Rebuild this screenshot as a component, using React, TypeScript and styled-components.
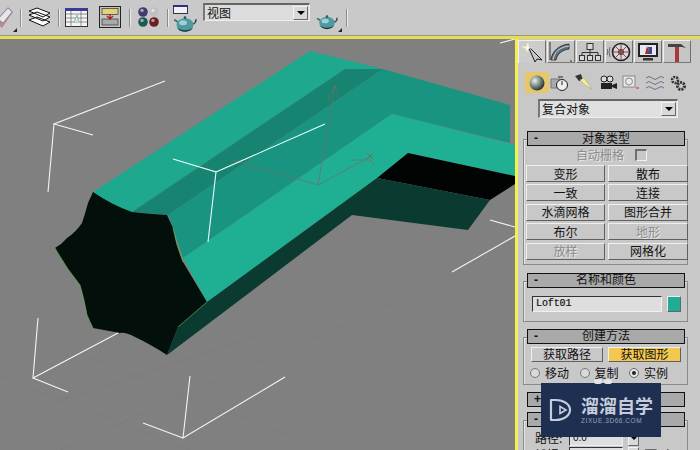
import React from "react";
import styled, { createGlobalStyle } from "styled-components";

const Global = createGlobalStyle`
  html, body { margin: 0; padding: 0; width: 700px; height: 450px; overflow: hidden; background: #c8c8c8; }
  body { font-family: "Noto Sans CJK SC", "Liberation Sans", sans-serif; }
`;

const Page = styled.div`
  width: 700px; height: 450px; display: flex; flex-direction: column; overflow: hidden; position: relative;
  background: #c8c8c8; color: #111; font-size: 12px; line-height: 1;
`;
const Toolbar = styled.header`
  height: 36px; flex: none; display: flex; align-items: flex-start; background: #c9c9c9;
  border-bottom: 3px solid #e6dc5a; box-shadow: inset 0 -1px 0 #9a9a80;
`;
const Tool = styled.div<{ $w: number; $ml: number; $mt: number }>`
  width: ${p => p.$w}px; margin-left: ${p => p.$ml}px; margin-top: ${p => p.$mt}px; flex: none; line-height: 0; overflow: hidden;
`;
const Sep = styled.div<{ $ml: number }>`
  width: 1px; height: 18px; margin-left: ${p => p.$ml}px; margin-top: 9px; flex: none;
  background: #8c8c8c; box-shadow: 1px 0 0 #ececec;
`;
const ViewCombo = styled.div`
  width: 107px; height: 18px; margin-left: 6px; margin-top: 3px; flex: none; box-sizing: border-box; display: flex; align-items: center;
  background: #dcdcdc; border-top: 2px solid #666; border-left: 2px solid #777; border-right: 1px solid #eee; border-bottom: 1px solid #eee;
  padding-left: 2px; font-size: 12px;
`;
const ComboLabel = styled.span` flex: 1; `;
const ComboArrow = styled.div`
  width: 15px; height: 14px; margin-right: 1px; box-sizing: border-box; display: flex; align-items: center; justify-content: center; background: #d8d8d8;
  border-top: 1px solid #f4f4f4; border-left: 1px solid #f4f4f4; border-right: 1px solid #666; border-bottom: 1px solid #666;
  &::after { content: ""; border-left: 4px solid transparent; border-right: 4px solid transparent; border-top: 4px solid #000; }
`;
const Main = styled.main` flex: 1; display: flex; min-height: 0; `;
const Viewport = styled.section`
  width: 515px; flex: none; background: #808080; line-height: 0; overflow: hidden;
`;
const Panel = styled.aside`
  flex: 1; overflow: hidden; background: #c8c8c8; border-left: 3px solid #f5f050; box-sizing: border-box;
`;
const Tabs = styled.nav` display: flex; gap: 1px; margin-top: 1px; height: 23px; `;
const Tab = styled.div<{ $active?: boolean }>`
  width: 28px; flex: none; box-sizing: border-box; display: flex; align-items: center; justify-content: center; line-height: 0;
  border-top: 1px solid #f0f0f0; border-left: 1px solid #f0f0f0; border-right: 1px solid #707070;
  border-bottom: ${p => (p.$active ? "none" : "1px solid #777")};
  background: ${p => (p.$active ? "#cccccc" : "#c6c6c6")};
`;
const IconRow = styled.div` display: flex; margin-top: 9px; padding-left: 7px; height: 21px; `;
const IconCell = styled.div<{ $on?: boolean }>`
  width: 23.6px; flex: none; display: flex; align-items: center; justify-content: center; line-height: 0;
  background: ${p => (p.$on ? "#e8c66a" : "transparent")};
`;
const TypeCombo = styled(ViewCombo)`
  width: 140px; height: 19px; margin: 6px 0 0 20px; background: #e0e0e0;
`;
const Stack = styled.div` margin: 13px 0 0 5px; width: 165px; display: flex; flex-direction: column; `;
const Rollout = styled.div<{ $mb?: number }>` margin-bottom: ${p => p.$mb ?? 7}px; `;
const RollHead = styled.div`
  position: relative; height: 15px; margin: 0 3px 0 4px; box-sizing: border-box; padding-bottom: 2px;
  border: 1px solid #111; background: #a9a9a9; display: flex; align-items: center; justify-content: center;
`;
const Minus = styled.span` position: absolute; left: 6px; top: 0; font-family: "Liberation Sans", sans-serif; font-size: 12px; font-weight: 700; line-height: 12px; `;
const RollBody = styled.div<{ $pt: number; $pb: number; $px?: number }>`
  margin-top: -7px; box-sizing: border-box; border: 1px solid #8a8a8a; box-shadow: 1px 1px 0 #e6e6e6 inset;
  padding: ${p => p.$pt}px ${p => p.$px ?? 0}px ${p => p.$pb}px ${p => (p.$px ?? 0) + 2}px;
`;
const CheckRow = styled.div` display: flex; align-items: center; height: 12px; margin-bottom: 4px; padding-left: 50px; gap: 11px; `;
const Off = styled.span` color: #8c8c8c; text-shadow: 1px 1px 0 #e8e8e8; `;
const Check = styled.span<{ $dark?: boolean }>`
  width: 12px; height: 12px; box-sizing: border-box; display: block; flex: none; background: ${p => (p.$dark ? "#6a6a6a" : "#c8c8c8")};
  border-top: 2px solid #707070; border-left: 2px solid #707070; border-right: 1px solid #f0f0f0; border-bottom: 1px solid #f0f0f0;
`;
const BtnGrid = styled.div` display: grid; grid-template-columns: 79px 80px; column-gap: 3px; grid-auto-rows: 17px; row-gap: 2.4px; `;
const Btn = styled.div<{ $off?: boolean; $hot?: boolean }>`
  box-sizing: border-box; display: flex; align-items: center; justify-content: center;
  background: ${p => (p.$hot ? "#f3c850" : "#c8c8c8")};
  color: ${p => (p.$off ? "#8a8a8a" : "#111")};
  text-shadow: ${p => (p.$off ? "1px 1px 0 #e8e8e8" : "none")};
  border-top: 1px solid #efefef; border-left: 1px solid #efefef; border-right: 1px solid #606060; border-bottom: 1px solid #606060;
`;
const NameRow = styled.div` display: flex; gap: 5px; `;
const Field = styled.div<{ $w: number }>`
  width: ${p => p.$w}px; height: 16px; box-sizing: border-box; flex: none; background: #dedede; display: flex; align-items: center; padding-left: 3px;
  border-top: 1px solid #333; border-left: 1px solid #333; border-right: 1px solid #f0f0f0; border-bottom: 1px solid #f0f0f0;
`;
const LoftText = styled.span` font-family: "Liberation Mono", monospace; font-size: 10px; letter-spacing: -0.1px; -webkit-text-stroke: 0.2px #111; `;
const Swatch = styled.div`
  width: 15px; height: 16px; background: #1fae93; box-sizing: border-box;
  border-top: 1px solid #eee; border-left: 1px solid #eee; border-right: 1px solid #666; border-bottom: 1px solid #666;
`;
const MethodGrid = styled.div` display: grid; grid-template-columns: 72px 73px; column-gap: 5px; grid-auto-rows: 15px; padding-left: 5px; margin-bottom: 4px; `;
const RadioRow = styled.div` display: flex; align-items: center; height: 14px; padding-left: 4px; `;
const RadioItem = styled.label` display: flex; align-items: center; gap: 5px; width: 49.5px; flex: none; font-size: 12px; `;
const Dot = styled.span<{ $on?: boolean }>`
  width: 10px; height: 10px; box-sizing: border-box; border-radius: 50%; flex: none;
  background: ${p => (p.$on ? "#222" : "#d8d8d8")};
  border: ${p => (p.$on ? "3px solid #e4e4e4" : "1px solid #777")};
  outline: ${p => (p.$on ? "1px solid #666" : "none")};
  outline-offset: -1px;
`;
const PathRow = styled.div` display: flex; align-items: center; height: 16px; padding-left: 9px; gap: 5px; margin-bottom: 1px; `;
const PathLabel = styled.span` width: 29px; flex: none; `;
const Spin = styled(ComboArrow)` width: 11px; height: 16px; `;
const NumText = styled.span` font-family: "Liberation Sans", sans-serif; font-size: 10px; `;
const Watermark = styled.div`
  position: absolute; z-index: 5; left: 541px; top: 383px; width: 120px; height: 54px; background: #1f2f52;
  display: flex; align-items: center; gap: 8px; padding-left: 7px; box-sizing: border-box;
  color: #c6cdda;
  &::before { content: ""; position: absolute; left: 53px; top: -4px; width: 8px; height: 5px; border-radius: 4px; background: #e4e4e4; box-shadow: 10px 0 0 #e4e4e4; }
`;
const MarkText = styled.div` display: flex; flex-direction: column; gap: 3px; `;
const MarkTitle = styled.div` font-size: 18px; font-weight: 700; line-height: 17px; width: 74px; white-space: nowrap; letter-spacing: 0; `;
const MarkSub = styled.div` font-family: "Liberation Sans", sans-serif; font-size: 6.5px; line-height: 7px; letter-spacing: 0.55px; white-space: nowrap; color: #98a3b8; `;

const Teapot = ({ w = 24 }: { w?: number }) => (
  <svg width={w} height={w * 0.72} viewBox="0 0 24 17">
    <path d="M1 5c2 0 4 2 5 5" stroke="#3c6a70" strokeWidth="1.6" fill="none" />
    <path d="M19 9c2 0 4-2 4-5" stroke="#1f4a50" strokeWidth="1.6" fill="none" />
    <ellipse cx="12" cy="9.5" rx="8.5" ry="6.5" fill="#4f9aa2" />
    <ellipse cx="10" cy="7.5" rx="4" ry="2.5" fill="#9fd0d4" />
    <path d="M4 12c3 4 13 4 16 0-2 6-14 6-16 0z" fill="#153c42" />
    <circle cx="12" cy="2.500" r="1.400" fill="#2a5a60" />
  </svg>
);
const Corner = () => (
  <svg width="4" height="4" viewBox="0 0 4 4"><path d="M4 0v4H0z" fill="#222" /></svg>
);
const Ball = ({ x, y, c }: { x: number; y: number; c: string }) => (
  <g>
    <circle cx={x} cy={y} r="4.8" fill={c} />
    <circle cx={x - 1} cy={y - 1.6} r="1.7" fill="#fff" opacity=".55" />
  </g>
);

const Scene = () => (
  <svg width="515" height="411" viewBox="0 39 515 411">
    <g stroke="#7a7a7a" strokeWidth="1" opacity=".4">
      <path d="M0 376L190 450M70 350L300 440M0 420L260 335M60 450L400 300" />
    </g>
    <polygon points="93,192 310,51 383,69 345,69 132,212 100,200" fill="#1ea88d" />
    <polygon points="132,212 345,69 383,69 168,215" fill="#178472" />
    <polygon points="168,215 383,69 510,105 510,143 392,114 183,258 172,225" fill="#199480" />
    <polygon points="183,258 392,114 515,145 515,176 408,153 377,178 207,302" fill="#1fb094" />
    <polygon points="408,153 515,176 515,184 490,200 377,178" fill="#020403" />
    <polygon points="207,302 377,178 490,200 468,230 352,215 167,355 178,327" fill="#0b3a31" />
    <path d="M93,192 Q112,205 132,212 Q150,214 167,215 L173,228 Q176,245 183,262 L207,302 L178,327 L167,355 Q150,344 135,337 Q125,332 120,333 L93,328 Q90,322 87,315 Q84,298 80,285 Q66,268 55,248 Q62,244 67,238 Q76,232 82,223 Q85,214 88,203Z" fill="#030f0b" />
    <path d="M55,248 Q66,268 80,285 Q84,298 87,315L93,328M173,228 Q176,245 183,262M178,327 L207,302" fill="none" stroke="#6fbe4a" strokeWidth=".7" opacity=".8" />
    <g fill="none" stroke="#6f7068" strokeWidth="1" opacity=".75">
      <path d="M318,185 L370,157M352,160 L370,160 L374,165M318,185 L335,85M328,100 L335,85 L339,100M318,185 L232,160" />
      <path d="M367,153 L373,159M373,153 L367,159" stroke="#8a5a40" />
    </g>
    <g fill="none" stroke="#f4f4f4" strokeWidth="1.1">
      <path d="M165,81 L54,124 L93,135M54,124 L48,192" />
      <path d="M173,159 L216,172 L208,242M216,172 L325,124" stroke="#eaffff" />
      <path d="M38,318 L33,378 L118,333M33,378 L68,392" />
      <path d="M190,376 L183,438 L285,377M183,438 L143,423" />
      <path d="M500,43 L515,39M490,220 L515,227M452,272 L515,236" />
    </g>
  </svg>
);

const tabIcons = [
  <svg key="a" width="24" height="20" viewBox="0 0 24 20"><path d="M8 4l14 14-5-1-2 3z" fill="#c8c8c8" stroke="#222" strokeWidth="1" /><path d="M1 4l5 1 2-5 1 5 3 1-4 1-1 4-1-4z" fill="#fffbd0" /></svg>,
  <svg key="b" width="24" height="20" viewBox="0 0 24 20"><path d="M2 18C3 9 10 3 20 2v5C13 8 8 12 7 18z" fill="#5b6f7d" stroke="#222" strokeWidth=".8" /><path d="M4 18C5 10 11 5 20 4" fill="none" stroke="#d0d8dc" strokeWidth="1" /><path d="M1 0v18M23 19h-2" stroke="#333" strokeWidth="1" /></svg>,
  <svg key="c" width="24" height="20" viewBox="0 0 24 20" fill="#d8d8d8" stroke="#333"><rect x="9" y="1.500" width="6" height="6" /><rect x="1.500" y="13.500" width="5" height="5" /><rect x="9.500" y="13.500" width="5" height="5" /><rect x="17.500" y="13.500" width="5" height="5" /><path d="M12 7.500v6M4 13.500V10.500h16v3" fill="none" /></svg>,
  <svg key="d" width="24" height="20" viewBox="0 0 24 20" fill="none" stroke="#222"><circle cx="14" cy="10" r="8.500" strokeWidth="1.600" fill="#d8d8d8" /><circle cx="14" cy="10" r="2.500" fill="#a05050" /><path d="M14 2v16M6 10h16M8 4l12 12M20 4L8 16" stroke="#8a4a4a" /><path d="M3 5Q1 10 3 15M0.500 7Q0 10 .5 13" stroke="#666" /></svg>,
  <svg key="e" width="24" height="20" viewBox="0 0 24 20"><rect x="2" y="1" width="20" height="14" fill="#222" /><rect x="4" y="3" width="16" height="10" fill="#e8e8f0" /><path d="M9 12l2-8 3 8z" fill="#b02a2a" /><path d="M12 5h4v7h-3z" fill="#3a4a9a" /><rect x="7" y="16" width="10" height="2.500" fill="#333" /></svg>,
  <svg key="f" width="24" height="20" viewBox="0 0 24 20"><path d="M3 2h13l5 4-4-1H3z" fill="#444" /><rect x="10" y="5" width="4" height="15" fill="#a83a3a" /></svg>,
];

const kindIcons = [
  <svg key="0" width="20" height="20" viewBox="0 0 20 20"><defs><radialGradient id="sph" cx=".35" cy=".35" r=".75"><stop offset="0" stopColor="#e8f0ee" /><stop offset=".55" stopColor="#6f7f78" /><stop offset="1" stopColor="#15201d" /></radialGradient></defs><circle cx="10" cy="10" r="7.500" fill="url(#sph)" /></svg>,
  <svg key="1" width="20" height="20" viewBox="0 0 20 20" fill="none" stroke="#222"><path d="M1 6h9l-2 9H1z" fill="#aaa" stroke="#777" /><circle cx="12" cy="12" r="5.500" fill="#eee" /><path d="M12 12V8M8 4h5" /></svg>,
  <svg key="2" width="20" height="20" viewBox="0 0 20 20"><path d="M1 3l6-2 2 6-4 1z" fill="#333" /><path d="M6 7l4-2 8 11-7-4z" fill="#f4f08a" stroke="#999" strokeWidth=".5" /></svg>,
  <svg key="3" width="20" height="20" viewBox="0 0 20 20" fill="#222"><circle cx="6" cy="6" r="3" fill="#ddd" stroke="#222" /><circle cx="12" cy="6" r="3" fill="#ddd" stroke="#222" /><rect x="3" y="10" width="11" height="6" /><path d="M14 12l5-2v6l-5-2z" /></svg>,
  <svg key="4" width="20" height="20" viewBox="0 0 20 20" fill="none"><rect x="2" y="3" width="12" height="11" stroke="#888" fill="#e6e6e6" /><circle cx="8" cy="8.500" r="3.500" stroke="#888" /><path d="M15 15h3" stroke="#a33" /></svg>,
  <svg key="5" width="20" height="20" viewBox="0 0 20 20" fill="none" stroke="#6a7288"><path d="M1 5q3-3 6 0t6 0 6 0M1 10q3-3 6 0t6 0 6 0M1 15q3-3 6 0t6 0 6 0" /></svg>,
  <svg key="6" width="20" height="20" viewBox="0 0 20 20" fill="none" stroke="#333"><circle cx="7" cy="7" r="3" strokeWidth="2.500" strokeDasharray="2 1" /><circle cx="13" cy="13" r="3.500" strokeWidth="3" strokeDasharray="2 1" /></svg>,
];

export default function App() {
  return (
    <Page>
      <Global />
      <Toolbar>
        <Tool $w={13} $ml={0} $mt={7}>
          <svg width="13" height="21" viewBox="0 0 13 21"><path d="M-5 15L8 0l5 5L2 21z" fill="#b88a9a" /><path d="M-2 12L8 1l4 4L3 16z" fill="#e6e6ee" stroke="#555" strokeWidth=".5" /></svg>
        </Tool>
        <Tool $w={4} $ml={0} $mt={27}><Corner /></Tool>
        <Sep $ml={3} />
        <Tool $w={23} $ml={7} $mt={7}>
          <svg width="23" height="20" viewBox="0 0 23 20" fill="#fff" stroke="#111" strokeWidth="1"><path d="M1 13l8-3 13 5-7 4zM1 8l8-3 13 5-7 4zM1 4l8-3 13 5-7 4z" /></svg>
        </Tool>
        <Sep $ml={7} />
        <Tool $w={23} $ml={6} $mt={8}>
          <svg width="23" height="20" viewBox="0 0 23 20"><rect x=".5" y=".5" width="22" height="18" fill="#f4f4f4" stroke="#333" /><rect x="0" y="0" width="23" height="3" fill="#3b3b9a" /><path d="M1 6h21M1 10h21M1 14h21M6 3v16M16 3v16" stroke="#666" strokeWidth=".7" /><path d="M9 14l3-7 2 7" fill="#cfe8d8" stroke="#68a" strokeWidth=".6" /></svg>
        </Tool>
        <Tool $w={23} $ml={11} $mt={6}>
          <svg width="23" height="23" viewBox="0 0 23 23"><rect x=".5" y=".5" width="21" height="21" fill="#c4c4c4" stroke="#222" /><rect x="3" y="2.500" width="16" height="6" fill="#e4d278" stroke="#333" strokeWidth=".7" /><rect x="3" y="13" width="16" height="6" fill="#a9a9a9" stroke="#333" strokeWidth=".7" /><path d="M11 8v4M8 10l3 3 3-3" stroke="#b02020" strokeWidth="1.400" fill="none" /></svg>
        </Tool>
        <Sep $ml={7} />
        <Tool $w={22} $ml={8} $mt={7}>
          <svg width="22" height="20" viewBox="0 0 22 20"><Ball x={5} y={5} c="#3e3e6e" /><Ball x={16} y={5} c="#c0c0c0" /><Ball x={5} y={15} c="#1f5a52" /><Ball x={16} y={15} c="#6a1f24" /></svg>
        </Tool>
        <Sep $ml={7} />
        <Tool $w={24} $ml={5} $mt={5}>
          <svg width="16" height="9" viewBox="0 0 16 9" style={{ marginBottom: 1 }}><rect x=".5" y=".5" width="14" height="8" fill="#f0f0f0" stroke="#334" /><rect width="15" height="2" fill="#2e2e8a" /></svg>
          <Teapot />
        </Tool>
        <ViewCombo>
          <ComboLabel>视图</ComboLabel>
          <ComboArrow />
        </ViewCombo>
        <Tool $w={22} $ml={6} $mt={14}><Teapot w={22} /></Tool>
        <Tool $w={4} $ml={0} $mt={27}><Corner /></Tool>
        <Sep $ml={4} />
      </Toolbar>
      <Main>
        <Viewport><Scene /></Viewport>
        <Panel>
          <Tabs>
            {tabIcons.map((ic, i) => <Tab key={i} $active={i === 0}>{ic}</Tab>)}
          </Tabs>
          <IconRow>
            {kindIcons.map((ic, i) => <IconCell key={i} $on={i === 0}>{ic}</IconCell>)}
          </IconRow>
          <TypeCombo>
            <ComboLabel>复合对象</ComboLabel>
            <ComboArrow />
          </TypeCombo>
          <Stack>
            <Rollout $mb={8}>
              <RollHead><Minus>-</Minus>对象类型</RollHead>
              <RollBody $pt={9} $pb={4}>
                <CheckRow><Off>自动栅格</Off><Check /></CheckRow>
                <BtnGrid>
                  <Btn>变形</Btn><Btn>散布</Btn>
                  <Btn>一致</Btn><Btn>连接</Btn>
                  <Btn>水滴网格</Btn><Btn>图形合并</Btn>
                  <Btn>布尔</Btn><Btn $off>地形</Btn>
                  <Btn $off>放样</Btn><Btn>网格化</Btn>
                </BtnGrid>
              </RollBody>
            </Rollout>
            <Rollout>
              <RollHead><Minus>-</Minus>名称和颜色</RollHead>
              <RollBody $pt={14} $pb={9} $px={6}>
                <NameRow>
                  <Field $w={130}><LoftText>Loft01</LoftText></Field>
                  <Swatch />
                </NameRow>
              </RollBody>
            </Rollout>
            <Rollout>
              <RollHead><Minus>-</Minus>创建方法</RollHead>
              <RollBody $pt={9} $pb={4}>
                <MethodGrid>
                  <Btn>获取路径</Btn><Btn $hot>获取图形</Btn>
                </MethodGrid>
                <RadioRow>
                  <RadioItem><Dot />移动</RadioItem>
                  <RadioItem><Dot />复制</RadioItem>
                  <RadioItem><Dot $on />实例</RadioItem>
                </RadioRow>
              </RollBody>
            </Rollout>
            <Rollout $mb={5}>
              <RollHead><Minus>+</Minus></RollHead>
            </Rollout>
            <Rollout>
              <RollHead><Minus>-</Minus></RollHead>
              <RollBody $pt={9} $pb={4}>
                <PathRow>
                  <PathLabel>路径:</PathLabel>
                  <Field $w={54}><NumText>0.0</NumText></Field>
                  <Spin />
                </PathRow>
                <PathRow>
                  <PathLabel>捕捉:</PathLabel>
                  <Field $w={54} />
                  <Spin />
                  <Check $dark />
                  <span>启用</span>
                </PathRow>
              </RollBody>
            </Rollout>
          </Stack>
        </Panel>
      </Main>
      <Watermark>
        <svg width="25" height="24" viewBox="0 0 25 24" fill="none" stroke="#c6cdda" strokeWidth="2.200">
          <path d="M3 2h5a14 10 0 0 1 0 20H3z" strokeLinejoin="round" />
          <path d="M12 8.500l6 3.500-6 3.500z" strokeWidth="1.600" />
        </svg>
        <MarkText>
          <MarkTitle>溜溜自学</MarkTitle>
          <MarkSub>ZIXUE.3D66.COM</MarkSub>
        </MarkText>
      </Watermark>
    </Page>
  );
}
